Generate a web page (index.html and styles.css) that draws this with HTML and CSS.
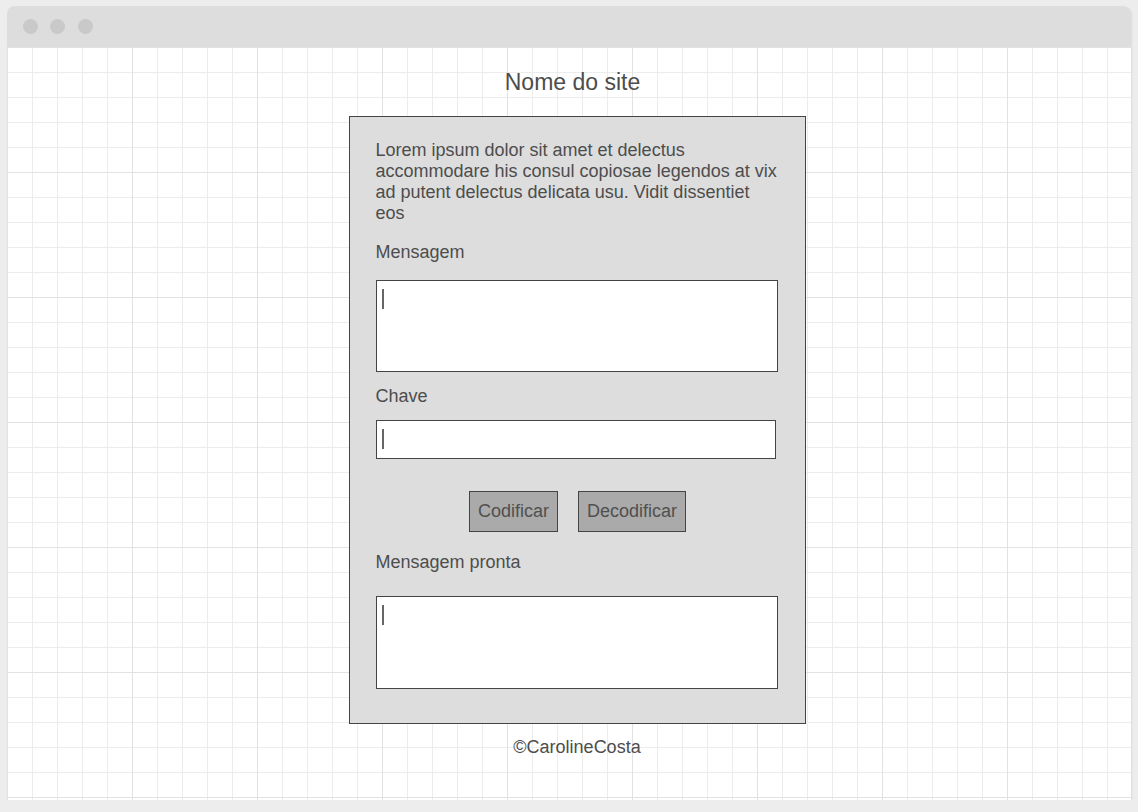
FILE: index.html
```html
<!DOCTYPE html>
<html lang="pt">
<head>
<meta charset="utf-8">
<title>Nome do site</title>
<link rel="stylesheet" href="styles.css">
</head>
<body>
<div class="window">
  <div class="titlebar">
    <span class="dot"></span><span class="dot"></span><span class="dot"></span>
  </div>
  <main class="canvas">
    <h1 class="site-title">Nome do site</h1>
    <section class="panel">
      <p class="intro">Lorem ipsum dolor sit amet et delectus accommodare his consul copiosae legendos at vix ad putent delectus delicata usu. Vidit dissentiet eos</p>
      <label class="label label-msg">Mensagem</label>
      <div class="field area"><span class="caret"></span></div>
      <label class="label label-key">Chave</label>
      <div class="field input"><span class="caret"></span></div>
      <div class="actions">
        <button class="btn btn-encode">Codificar</button>
        <button class="btn btn-decode">Decodificar</button>
      </div>
      <label class="label label-out">Mensagem pronta</label>
      <div class="field area area-out"><span class="caret"></span></div>
    </section>
    <footer class="footer">©CarolineCosta</footer>
  </main>
</div>
</body>
</html>
```

FILE: styles.css
```css
html, body {
  margin: 0;
  padding: 0;
}
body {
  background: #ededed;
  font-family: "Liberation Sans", Arial, sans-serif;
  color: #4d4d4d;
  padding: 6px 7px 0 7px;
}
.window {
  width: 1124px;
  height: 794px;
  border-radius: 7px 7px 0 0;
  overflow: hidden;
  background: #fff;
  box-shadow: 1px 1px 2px rgba(0,0,0,0.08);
  display: flex;
  flex-direction: column;
}
.titlebar {
  height: 41px;
  background: #dddddd;
  display: flex;
  align-items: center;
  gap: 12.5px;
  padding-left: 15.5px;
  flex-shrink: 0;
}
.dot {
  width: 15px;
  height: 15px;
  border-radius: 50%;
  background: #c9c9c9;
}
.canvas {
  flex: 1;
  display: flex;
  flex-direction: column;
  align-items: center;
  padding-left: 16px;
  background-color: #fff;
  background-image:
    linear-gradient(to right, #e2e2e2 1px, transparent 1px),
    linear-gradient(to bottom, #e2e2e2 1px, transparent 1px),
    linear-gradient(to right, #ececec 1px, transparent 1px),
    linear-gradient(to bottom, #ececec 1px, transparent 1px);
  background-size: 125px 125px, 125px 125px, 25px 25px, 25px 25px;
}
.site-title {
  margin: 22px 0 0 -9px;
  font-size: 23px;
  font-weight: normal;
  line-height: 26px;
  color: #4d4d4d;
}
.panel {
  margin-top: 21px;
  width: 455px;
  box-sizing: content-box;
  background: #dddddd;
  border: 1px solid #444;
  padding: 23px 0 34px 0;
  display: flex;
  flex-direction: column;
  align-items: flex-start;
}
.panel > * {
  margin-left: 26px;
}
.intro {
  margin-top: 0;
  margin-bottom: 0;
  width: 404px;
  font-size: 18px;
  line-height: 21px;
  color: #4d4d4d;
}
.label {
  display: block;
  font-size: 18px;
  line-height: 21px;
  color: #4d4d4d;
}
.label-msg { margin-top: 18px; }
.label-key { margin-top: 14px; }
.label-out { margin-top: 20px; }
.field {
  background: #fff;
  border: 1px solid #444;
  box-sizing: border-box;
  position: relative;
}
.area {
  width: 402px;
  height: 92px;
  margin-top: 17px;
}
.area-out {
  height: 93px;
  margin-top: 23px;
}
.input {
  width: 400px;
  height: 39px;
  margin-top: 13px;
}
.caret {
  position: absolute;
  left: 5px;
  top: 8px;
  width: 2px;
  height: 20px;
  background: #666;
}
.actions {
  align-self: stretch;
  margin-left: 0;
  margin-top: 32px;
  display: flex;
  justify-content: center;
  gap: 20px;
  padding-left: 1px;
}
.btn {
  height: 41px;
  padding: 0;
  background: #aaaaaa;
  border: 1px solid #444;
  border-radius: 0;
  font-family: "Liberation Sans", Arial, sans-serif;
  font-size: 18px;
  color: #505050;
}
.btn-encode { width: 89px; }
.btn-decode { width: 108px; }
.footer {
  margin-top: 12px;
  font-size: 18px;
  line-height: 22px;
  color: #4d4d4d;
}
```
